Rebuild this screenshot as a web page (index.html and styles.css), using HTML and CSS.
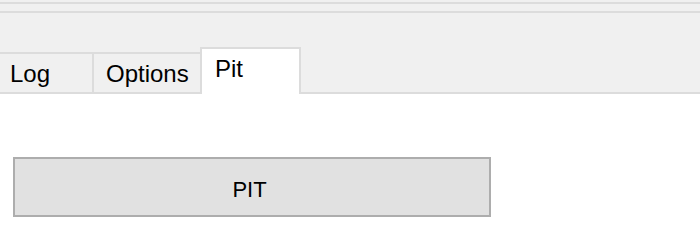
FILE: index.html
```html
<!DOCTYPE html>
<html>
<head>
<meta charset="utf-8">
<link rel="stylesheet" href="styles.css">
</head>
<body>
<div class="chrome">
  <div class="rule rule-a"></div>
  <div class="rule rule-b"></div>
  <div class="tabstrip">
    <div class="tab tab-log">Log</div>
    <div class="tab tab-options">Options</div>
    <div class="tab tab-pit active">Pit</div>
    <div class="filler"></div>
  </div>
</div>
<div class="page">
  <div class="button">PIT</div>
</div>
</body>
</html>
```
FILE: styles.css
```css
* { box-sizing: border-box; }
html, body { margin: 0; padding: 0; background: #ffffff; }
body { width: 700px; height: 229px; overflow: hidden; font-family: "Liberation Sans", Arial, sans-serif; color: #000; }

.chrome { background: #f0f0f0; padding-top: 2px; }
.rule { height: 2px; background: #dcdcdc; }
.rule-a { margin-bottom: 7px; }
.tabstrip { height: 81px; display: flex; align-items: flex-end; }

.tab {
  font-size: 24px;
  line-height: 24px;
  white-space: nowrap;
  background: #f0f0f0;
  border-top: 2px solid #dcdcdc;
  border-bottom: 2px solid #dcdcdc;
  padding-top: 8px;
  padding-bottom: 6px;
  height: 42px;
}
.tab-log { width: 94px; padding-left: 10px; border-right: 2px solid #dcdcdc; }
.tab-options { width: 106px; padding-left: 12px; }
.tab-pit.active {
  width: 101px;
  height: 47px;
  background: #ffffff;
  border: 2px solid #dcdcdc;
  border-bottom: none;
  padding-left: 13px;
  padding-top: 8px;
  padding-bottom: 13px;
}
.filler { flex: 1; height: 2px; background: #dcdcdc; }

.page { padding: 63px 0 0 13px; }
.button {
  width: 478px;
  height: 60px;
  background: #e1e1e1;
  border: 2px solid #adadad;
  display: flex;
  align-items: center;
  justify-content: center;
  font-size: 22px;
  line-height: 22px;
  padding-top: 5px;
  padding-right: 5px;
}
```
